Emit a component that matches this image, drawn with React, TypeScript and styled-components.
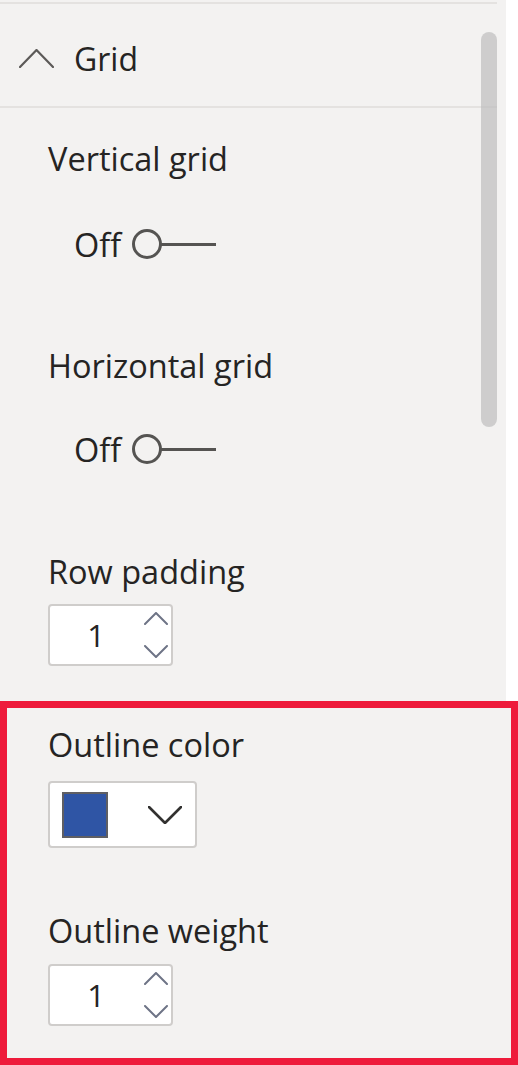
import React from "react";
import styled, { createGlobalStyle } from "styled-components";

const Global = createGlobalStyle`
  html, body { margin: 0; padding: 0; background: #ffffff; }
  body { font-family: "Open Sans", "Noto Sans", "Liberation Sans", sans-serif; color: #252423; }
`;

const Page = styled.div`
  width: 518px;
  height: 1065px;
  display: flex;
  flex-direction: column;
  overflow: hidden;
`;

const Panel = styled.div`
  position: relative;
  width: 506px;
  height: 701px;
  background: #f3f2f1;
  display: flex;
  flex-direction: column;
`;

const Rule = styled.div<{ $top: number }>`
  margin-top: ${(p) => p.$top}px;
  width: 497px;
  height: 2px;
  background: #e4e2e0;
  flex-shrink: 0;
`;

const Header = styled.div`
  box-sizing: border-box;
  height: 102px;
  padding-top: 7px;
  display: flex;
  align-items: center;
  padding-left: 19px;
  gap: 20px;
  font-size: 32px;
  line-height: 1;
`;

const Thumb = styled.div`
  position: absolute;
  left: 481px;
  top: 32px;
  width: 16px;
  height: 395px;
  border-radius: 8px;
  background: rgba(190, 190, 190, 0.7);
`;

const Body = styled.div`
  display: flex;
  flex-direction: column;
  padding-left: 48px;
`;

const Label = styled.div<{ $top: number }>`
  margin-top: ${(p) => p.$top}px;
  height: 38px;
  line-height: 38px;
  font-size: 32.5px;
  white-space: nowrap;
`;

const ToggleRow = styled.div<{ $top: number }>`
  margin-top: ${(p) => p.$top}px;
  height: 40px;
  display: flex;
  align-items: center;
  padding-left: 26px;
  gap: 11px;
  font-size: 32.5px;
`;

const Knob = styled.div`
  width: 24px;
  height: 24px;
  border: 3px solid #555452;
  border-radius: 50%;
  flex-shrink: 0;
`;

const Track = styled.div`
  width: 55px;
  height: 3px;
  margin-left: -1px;
  background: #555452;
`;

const Switch = styled.div`
  display: flex;
  align-items: center;
`;

const Spin = styled.div<{ $top: number }>`
  margin-top: ${(p) => p.$top}px;
  width: 121px;
  height: 58px;
  background: #ffffff;
  border: 2px solid #cfcdcb;
  border-radius: 4px;
  display: flex;
  align-items: center;
  font-size: 31px;
`;

const SpinValue = styled.div`
  width: 92px;
  text-align: center;
  padding-right: 2px;
`;

const Arrows = styled.div`
  display: flex;
  flex-direction: column;
  justify-content: space-between;
  height: 46px;
`;

const Highlight = styled.div`
  flex: 1;
  border: 7px solid #ee1b3b;
  display: flex;
`;

const Inner = styled.div`
  width: 499px;
  background: #f3f2f1;
  display: flex;
  flex-direction: column;
  padding-left: 41px;
`;

const ColorBox = styled.div<{ $top: number }>`
  margin-top: ${(p) => p.$top}px;
  width: 149px;
  height: 67px;
  background: #ffffff;
  border: 2px solid #cfcdcb;
  border-radius: 4px;
  box-sizing: border-box;
  display: flex;
  align-items: center;
  padding-left: 12px;
  gap: 40px;
`;

const Swatch = styled.div<{ $color: string }>`
  width: 42px;
  height: 42px;
  background: ${(p) => p.$color};
  border: 2px solid #5f5f63;
`;

const Chevron = ({ dir, w, h, sw, color }: { dir: "up" | "down"; w: number; h: number; sw: number; color: string }) => (
  <svg width={w} height={h} viewBox={`0 0 ${w} ${h}`} fill="none">
    <polyline
      points={dir === "up" ? `1,${h - 1} ${w / 2},1 ${w - 1},${h - 1}` : `1,1 ${w / 2},${h - 1} ${w - 1},1`}
      stroke={color}
      strokeWidth={sw}
      strokeLinecap="round"
      strokeLinejoin="round"
    />
  </svg>
);

const Toggle = ({ top }: { top: number }) => (
  <ToggleRow $top={top}>
    <span>Off</span>
    <Switch>
      <Knob />
      <Track />
    </Switch>
  </ToggleRow>
);

const Spinner = ({ top, value }: { top: number; value: string }) => (
  <Spin $top={top}>
    <SpinValue>{value}</SpinValue>
    <Arrows>
      <Chevron dir="up" w={24} h={13} sw={2} color="#6e7486" />
      <Chevron dir="down" w={24} h={13} sw={2} color="#6e7486" />
    </Arrows>
  </Spin>
);

export default function App() {
  return (
    <>
      <Global />
      <Page>
        <Panel>
          <Rule $top={2} />
          <Header>
            <Chevron dir="up" w={35} h={19} sw={2.2} color="#5c5a58" />
            <span>Grid</span>
          </Header>
          <Rule $top={0} />
          <Body>
            <Label $top={32}>Vertical grid</Label>
            <Toggle top={46} />
            <Label $top={83}>Horizontal grid</Label>
            <Toggle top={44} />
            <Label $top={84}>Row padding</Label>
            <Spinner top={13} value="1" />
          </Body>
          <Thumb />
        </Panel>
        <Highlight>
          <Inner>
            <Label $top={18}>Outline color</Label>
            <ColorBox $top={17}>
              <Swatch $color="#2f55a5" />
              <Chevron dir="down" w={34} h={18} sw={2.6} color="#323130" />
            </ColorBox>
            <Label $top={64}>Outline weight</Label>
            <Spinner top={14} value="1" />
          </Inner>
        </Highlight>
      </Page>
    </>
  );
}
